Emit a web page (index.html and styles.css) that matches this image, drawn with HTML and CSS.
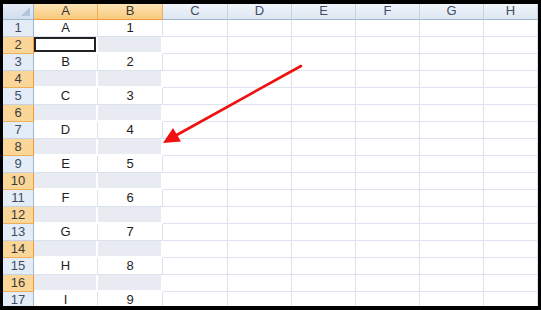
FILE: index.html
```html
<!DOCTYPE html>
<html lang="en">
<head>
    <meta charset="UTF-8">
    <title>Sheet</title>
    <link rel="stylesheet" href="styles.css">
</head>
<body>
    <div class="frame">
        <div class="sheet" id="sheet"></div>
        <svg class="arrow" width="541" height="310" viewBox="0 0 541 310">
            <line x1="301" y1="66" x2="174" y2="136.5" stroke="#f01010" stroke-width="2.6" stroke-linecap="round"/>
            <polygon points="163,143 181,141.5 173,128" fill="#f01010"/>
        </svg>
    </div>

    <script>
        let cols = ["A", "B", "C", "D", "E", "F", "G", "H"];
        let letters = ["A", "B", "C", "D", "E", "F", "G", "H", "I"];

        function buildSheet() {
            let sheet = document.getElementById("sheet");
            let html = "<div class='corner'><span class='tri'></span></div>";
            cols.forEach((c, i) => {
                html += `<div class='colhead${i < 2 ? " sel" : ""}'>${c}</div>`;
            });
            for (let r = 1; r <= 17; r++) {
                let even = r % 2 === 0;
                html += `<div class='rowhead${even ? " sel" : ""}'>${r}</div>`;
                cols.forEach((c, i) => {
                    let text = "";
                    if (!even && i === 0) text = letters[(r - 1) / 2];
                    if (!even && i === 1) text = (r + 1) / 2;
                    let cls = "cell";
                    if (even && i < 2) cls += " shade";
                    if (r === 2 && i === 0) cls += " active";
                    html += `<div class='${cls}'>${text}</div>`;
                });
            }
            sheet.innerHTML = html;
        }

        window.onload = buildSheet;
    </script>
</body>
</html>
```

FILE: styles.css
```css
body {
    margin: 0;
    background: #000;
}
.frame {
    position: relative;
    width: 541px;
    height: 310px;
    padding: 4px 3px 0 3px;
    box-sizing: border-box;
    overflow: hidden;
}
.sheet {
    display: grid;
    grid-template-columns: 31px 64px 65px 65px 64px 64px 64px 64px 54px;
    grid-template-rows: 16px repeat(17, 17px);
    height: 302px;
    overflow: hidden;
    background: #fff;
    font-family: "Liberation Sans", Arial, sans-serif;
    font-size: 13px;
    line-height: 15px;
    color: #1e1e1e;
}
.sheet > div {
    box-sizing: border-box;
    display: flex;
    align-items: flex-end;
    justify-content: center;
    padding-bottom: 1px;
}
.corner {
    position: relative;
    background: linear-gradient(#e3ebf6, #d2deef);
    border-right: 1px solid #9eb6ce;
    border-bottom: 1px solid #9eb6ce;
}
.tri {
    position: absolute;
    right: 3px;
    bottom: 3px;
    width: 0;
    height: 0;
    border-left: 9px solid transparent;
    border-bottom: 9px solid #b4c6de;
}
.colhead {
    background: linear-gradient(#f1f5fa, #dde6f2);
    border-right: 1px solid #c6d2e2;
    border-bottom: 1px solid #9eb6ce;
    color: #3d4e66;
}
.colhead.sel {
    background: linear-gradient(#fbe3b4, #f8c97c);
    border-right: 1px solid #f1ae5a;
    border-bottom: 1px solid #f29a3d;
    color: #3c3a36;
}
.rowhead {
    background: #e4ecf7;
    border-right: 1px solid #9eb6ce;
    border-bottom: 1px solid #c6d2e2;
    color: #3d4e66;
}
.rowhead.sel {
    background: #fad699;
    border-right: 1px solid #f29a3d;
    border-bottom: 1px solid #f1ae5a;
    color: #3c3a36;
}
.cell {
    border-right: 1px solid #dde3ee;
    border-bottom: 1px solid #dde3ee;
}
.cell.shade {
    background: #e8ebf2;
    border-right: 2px solid #fff;
    border-bottom: 2px solid #fff;
}
.cell.active {
    background: #fff;
    box-shadow: inset 0 0 0 2px #222;
}
.arrow {
    position: absolute;
    left: 0;
    top: 0;
}
```
